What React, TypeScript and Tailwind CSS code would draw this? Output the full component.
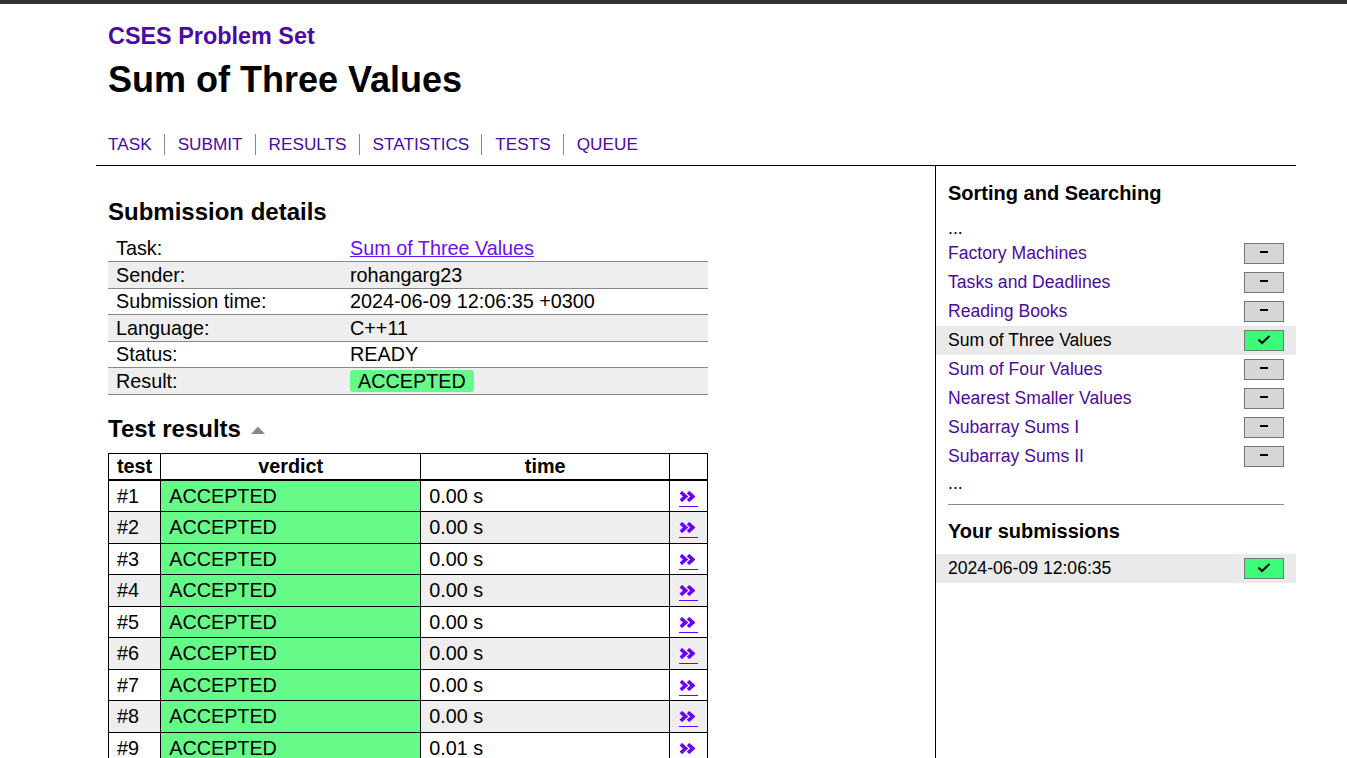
import React from 'react';

const NAV = ['TASK', 'SUBMIT', 'RESULTS', 'STATISTICS', 'TESTS', 'QUEUE'];

const DETAILS: [string, React.ReactNode][] = [
    ['Task:', <a className="text-[#6a0ff0] underline">Sum of Three Values</a>],
    ['Sender:', 'rohangarg23'],
    ['Submission time:', '2024-06-09 12:06:35 +0300'],
    ['Language:', 'C++11'],
    ['Status:', 'READY'],
    ['Result:', <span className="inline-block bg-[#66fa88] rounded-[3px] px-[8px] leading-[22px]">ACCEPTED</span>],
];

const TESTS = [
    ['#1', '0.00 s'],
    ['#2', '0.00 s'],
    ['#3', '0.00 s'],
    ['#4', '0.00 s'],
    ['#5', '0.00 s'],
    ['#6', '0.00 s'],
    ['#7', '0.00 s'],
    ['#8', '0.00 s'],
    ['#9', '0.01 s'],
];

const TASKS = [
    { name: 'Factory Machines', done: false },
    { name: 'Tasks and Deadlines', done: false },
    { name: 'Reading Books', done: false },
    { name: 'Sum of Three Values', done: true, current: true },
    { name: 'Sum of Four Values', done: false },
    { name: 'Nearest Smaller Values', done: false },
    { name: 'Subarray Sums I', done: false },
    { name: 'Subarray Sums II', done: false },
];

const StatusBox = ({ done }: { done: boolean }) => (
    <span
        className={
            done
                ? 'w-[40px] h-[21px] border border-[#777] bg-[#3bfb78] flex items-center justify-center'
                : 'w-[40px] h-[21px] border border-[#777] bg-[#d6d6d6] flex items-center justify-center'
        }
    >
        {done ? (
            <svg width="14" height="10" viewBox="0 0 14 10" className="mb-[2px]">
                <path d="M1.5 4.5 L5 8 L12.5 1" fill="none" stroke="#000" strokeWidth="2" />
            </svg>
        ) : (
            <span className="w-[8px] h-[2px] bg-black mb-[3px]" />
        )}
    </span>
);

// the "»" detail link under each test row
const Chevrons = () => (
    <a className="block mx-auto mt-[10px] w-[19px] border-b-[1.5px] border-[#6a00ff] pb-[4px]">
        <svg width="16" height="11" viewBox="0 0 16 11" className="block">
            <path d="M1.8 1.2 L6.6 5.5 L1.8 9.8" fill="none" stroke="#6a00ff" strokeWidth="3.6" />
            <path d="M9 1.2 L13.8 5.5 L9 9.8" fill="none" stroke="#6a00ff" strokeWidth="3.6" />
        </svg>
    </a>
);

export default function App() {
    return (
        <div className="min-h-screen bg-white text-black font-['Liberation_Sans',Arial,sans-serif] overflow-hidden">
            <div className="h-[4px] bg-[#333]" />
            <div className="ml-[96px] w-[1200px]">
                {/* header */}
                <div className="px-[12px] pt-[19px]">
                    <div className="text-[23.4px] font-bold text-[#4b0aa3] leading-[27px]">CSES Problem Set</div>
                    <h1 className="text-[36px] font-bold leading-[41px] mt-[9px]">Sum of Three Values</h1>
                    <nav className="flex items-center mt-[34px] text-[17.2px] leading-[21px] text-[#4b0aa3] pb-[10px]">
                        {NAV.map((n, i) => (
                            <span
                                key={n}
                                className={
                                    i === 0
                                        ? 'pr-[12px]'
                                        : 'border-l border-[#888] pl-[13px] pr-[12px]'
                                }
                            >
                                {n}
                            </span>
                        ))}
                    </nav>
                </div>

                <div className="flex border-t border-black">
                    {/* main */}
                    <div className="w-[840px] px-[12px] pt-[32px] border-r border-black">
                        <h2 className="text-[24px] font-bold leading-[28px]">Submission details</h2>
                        <table className="w-[600px] text-[19.8px] mt-[9px]">
                            <tbody>
                                {DETAILS.map(([k, v], i) => (
                                    <tr
                                        key={i}
                                        className={
                                            i % 2 === 1
                                                ? 'h-[26.5px] bg-[#eee] border-t border-b border-[#888]'
                                                : 'h-[26.5px]'
                                        }
                                    >
                                        <td className="w-[242px] pl-[8px] py-0 leading-[22px]">{k}</td>
                                        <td className="py-0 leading-[22px]">{v}</td>
                                    </tr>
                                ))}
                            </tbody>
                        </table>

                        <h2 className="text-[24px] font-bold leading-[28px] mt-[20px] flex items-center">
                            Test results
                            <svg width="16" height="10" viewBox="0 0 16 10" className="ml-[9px] mt-[2px]">
                                <path d="M1 9 L8 1.5 L15 9 Z" fill="#888" />
                            </svg>
                        </h2>
                        <table className="w-[600px] text-[19.8px] mt-[10px] border border-black">
                            <thead>
                                <tr className="h-[27px] border-b-2 border-black font-bold leading-[22px]">
                                    <th className="w-[52px] border border-black px-[8px] text-left">test</th>
                                    <th className="w-[260px] border border-black">verdict</th>
                                    <th className="w-[249px] border border-black">time</th>
                                    <th className="border border-black" />
                                </tr>
                            </thead>
                            <tbody>
                                {TESTS.map(([t, time], i) => (
                                    <tr
                                        key={t}
                                        className={
                                            i % 2 === 1
                                                ? 'h-[31.5px] bg-[#eee] leading-[22px]'
                                                : 'h-[31.5px] bg-white leading-[22px]'
                                        }
                                    >
                                        <td className="border border-black px-[8px]">{t}</td>
                                        <td className="border border-black px-[8px] bg-[#66fa88]">ACCEPTED</td>
                                        <td className="border border-black px-[8px]">{time}</td>
                                        <td className="border border-black align-top">
                                            <Chevrons />
                                        </td>
                                    </tr>
                                ))}
                            </tbody>
                        </table>
                    </div>

                    {/* sidebar */}
                    <div className="w-[360px] pt-[15px] text-[17.6px]">
                        <h4 className="px-[12px] text-[20px] font-bold leading-[24px]">Sorting and Searching</h4>
                        <div className="px-[12px] mt-[13px] leading-[20px]">...</div>
                        <ul className="mt-[1px]">
                            {TASKS.map((t) => (
                                <li
                                    key={t.name}
                                    className={
                                        t.current
                                            ? 'h-[29px] flex items-center justify-between pl-[12px] pr-[12px] bg-[#eaeaea]'
                                            : 'h-[29px] flex items-center justify-between pl-[12px] pr-[12px]'
                                    }
                                >
                                    <span className={t.current ? 'text-black' : 'text-[#4b0aa3]'}>{t.name}</span>
                                    <StatusBox done={t.done} />
                                </li>
                            ))}
                        </ul>
                        <div className="px-[12px] leading-[20px] mt-[2px]">...</div>
                        <hr className="mx-[12px] mt-[11px] border-t border-[#888]" />
                        <h4 className="px-[12px] text-[20px] font-bold leading-[24px] mt-[14px]">Your submissions</h4>
                        <div className="h-[29px] flex items-center justify-between pl-[12px] pr-[12px] bg-[#eaeaea] mt-[11px]">
                            <span>2024-06-09 12:06:35</span>
                            <StatusBox done />
                        </div>
                    </div>
                </div>
            </div>
        </div>
    );
}
